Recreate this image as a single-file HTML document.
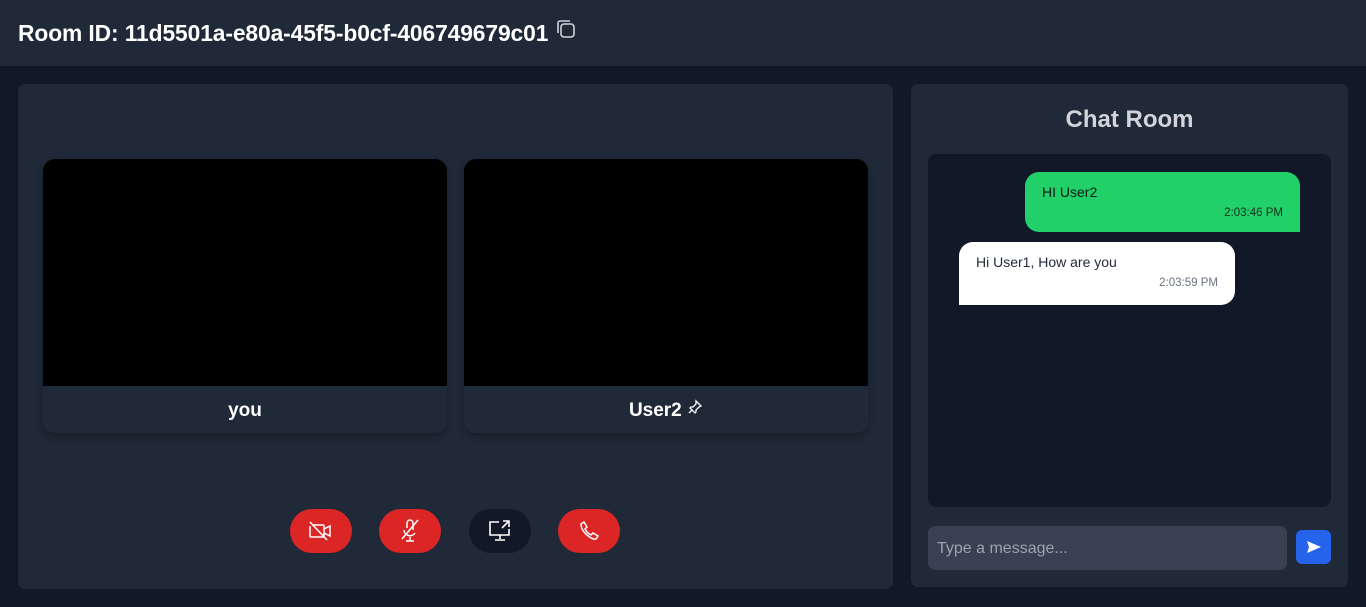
<!DOCTYPE html>
<html><head><meta charset="utf-8"><style>
*{box-sizing:border-box;margin:0;padding:0}
body{width:1366px;height:607px;background:#111827;font-family:"Liberation Sans",sans-serif;overflow:hidden;position:relative}
.hdr{position:absolute;left:0;top:0;width:1366px;height:66px;background:#1f2937}
.hdr h1{position:absolute;left:18px;top:20px;font-size:22.8px;font-weight:bold;color:#fff;letter-spacing:-0.1px}
.lp{position:absolute;left:18px;top:84px;width:875px;height:505px;background:#1f2937;border-radius:7px}
.rp{position:absolute;left:911px;top:84px;width:437px;height:503px;background:#1f2937;border-radius:7px}
.tile{position:absolute;top:159px;width:404px;height:274px;border-radius:12px;overflow:hidden;background:#1f2937;box-shadow:0 4px 8px rgba(0,0,0,.25)}
.tile .v{height:227px;background:#000}
.tile .l{height:47px;text-align:center;line-height:49px;color:#fff;font-weight:bold;font-size:19px}
.btn{position:absolute;top:509px;width:62px;height:44px;border-radius:22px;background:#dc2626;display:flex;align-items:center;justify-content:center}
.ct{position:absolute;left:911px;top:106px;width:437px;text-align:center;color:#d1d5db;font-size:24px;font-weight:bold}
.cb{position:absolute;left:928px;top:154px;width:403px;height:353px;background:#111827;border-radius:8px}
.b{position:absolute;font-size:14px;padding:12px 17px}
.b .t{font-size:11.5px;text-align:right;margin-top:7px}
</style></head><body>
<div class="hdr"><h1>Room ID: 11d5501a-e80a-45f5-b0cf-406749679c01</h1>
<svg style="position:absolute;left:555px;top:18px" width="22" height="22" viewBox="0 0 22 22" fill="none" stroke="#d1d5db" stroke-width="1.6"><rect x="6" y="6" width="13" height="13" rx="3"/><path d="M3 15V5a2 2 0 0 1 2-2h10"/></svg></div>
<div class="lp"></div>
<div class="tile" style="left:43px"><div class="v"></div><div class="l">you</div></div>
<div class="tile" style="left:464px"><div class="v"></div><div class="l">User2 <svg width="16" height="16" viewBox="0 0 16 16" fill="none" stroke="#fff" stroke-width="1.3" style="vertical-align:1px"><path d="M9 2l5 5-2 1-3 3 0 2-1 1-5-5 1-1 2 0 3-3z M5 11l-3 3"/></svg></div></div>
<div class="btn" style="left:290px"><svg width="28" height="22" viewBox="0 0 28 22" fill="none" stroke="#fff" stroke-width="1.5"><path d="M5 5h11a1 1 0 0 1 1 1v11H4a1 1 0 0 1-1-1V6M17 9l6-3v10l-6-3M3 2l17 18"/></svg></div>
<div class="btn" style="left:379px"><svg width="24" height="26" viewBox="0 0 24 26" fill="none" stroke="#fff" stroke-width="1.5"><path d="M9 10V5a3 3 0 0 1 6 0v7M6 12a6 6 0 0 0 11 3M12 19v4M8 23h8M4 21L20 2"/></svg></div>
<div class="btn" style="left:469px;background:#111827"><svg width="28" height="26" viewBox="0 0 28 26" fill="none" stroke="#fff" stroke-width="1.6"><path d="M13 4H4v13h19v-6M14 17v4M9 22h10M17 3h6v6M23 3l-7 7"/></svg></div>
<div class="btn" style="left:558px"><svg width="24" height="24" viewBox="0 0 24 24" fill="none" stroke="#fff" stroke-width="1.5"><path d="M4 5l3-2 3 5-2 2q2 4 6 6l2-2 5 3-2 3q-3 1-9-4T4 5z"/></svg></div>
<div class="rp"></div>
<div class="ct">Chat Room</div>
<div class="cb"></div>
<div class="b" style="left:1025px;top:172px;width:275px;height:60px;background:#22d06a;color:#0b1a10;border-radius:14px 14px 0 14px">HI User2<div class="t" style="color:#14301f">2:03:46 PM</div></div>
<div class="b" style="left:959px;top:242px;width:276px;height:63px;background:#fff;color:#1f2937;border-radius:14px 14px 14px 0">Hi User1, How are you<div class="t" style="color:#6b7280">2:03:59 PM</div></div>
<div style="position:absolute;left:928px;top:526px;width:359px;height:44px;background:#374151;border-radius:7px;color:#9ca3af;font-size:16px;line-height:46px;padding-left:9px">Type a message...</div>
<div style="position:absolute;left:1296px;top:530px;width:35px;height:34px;background:#2563eb;border-radius:6px;display:flex;align-items:center;justify-content:center"><svg width="16" height="14" viewBox="0 0 16 14"><path d="M1 1l14 6-14 6 2-6z" fill="#fff"/></svg></div>
</body></html>
